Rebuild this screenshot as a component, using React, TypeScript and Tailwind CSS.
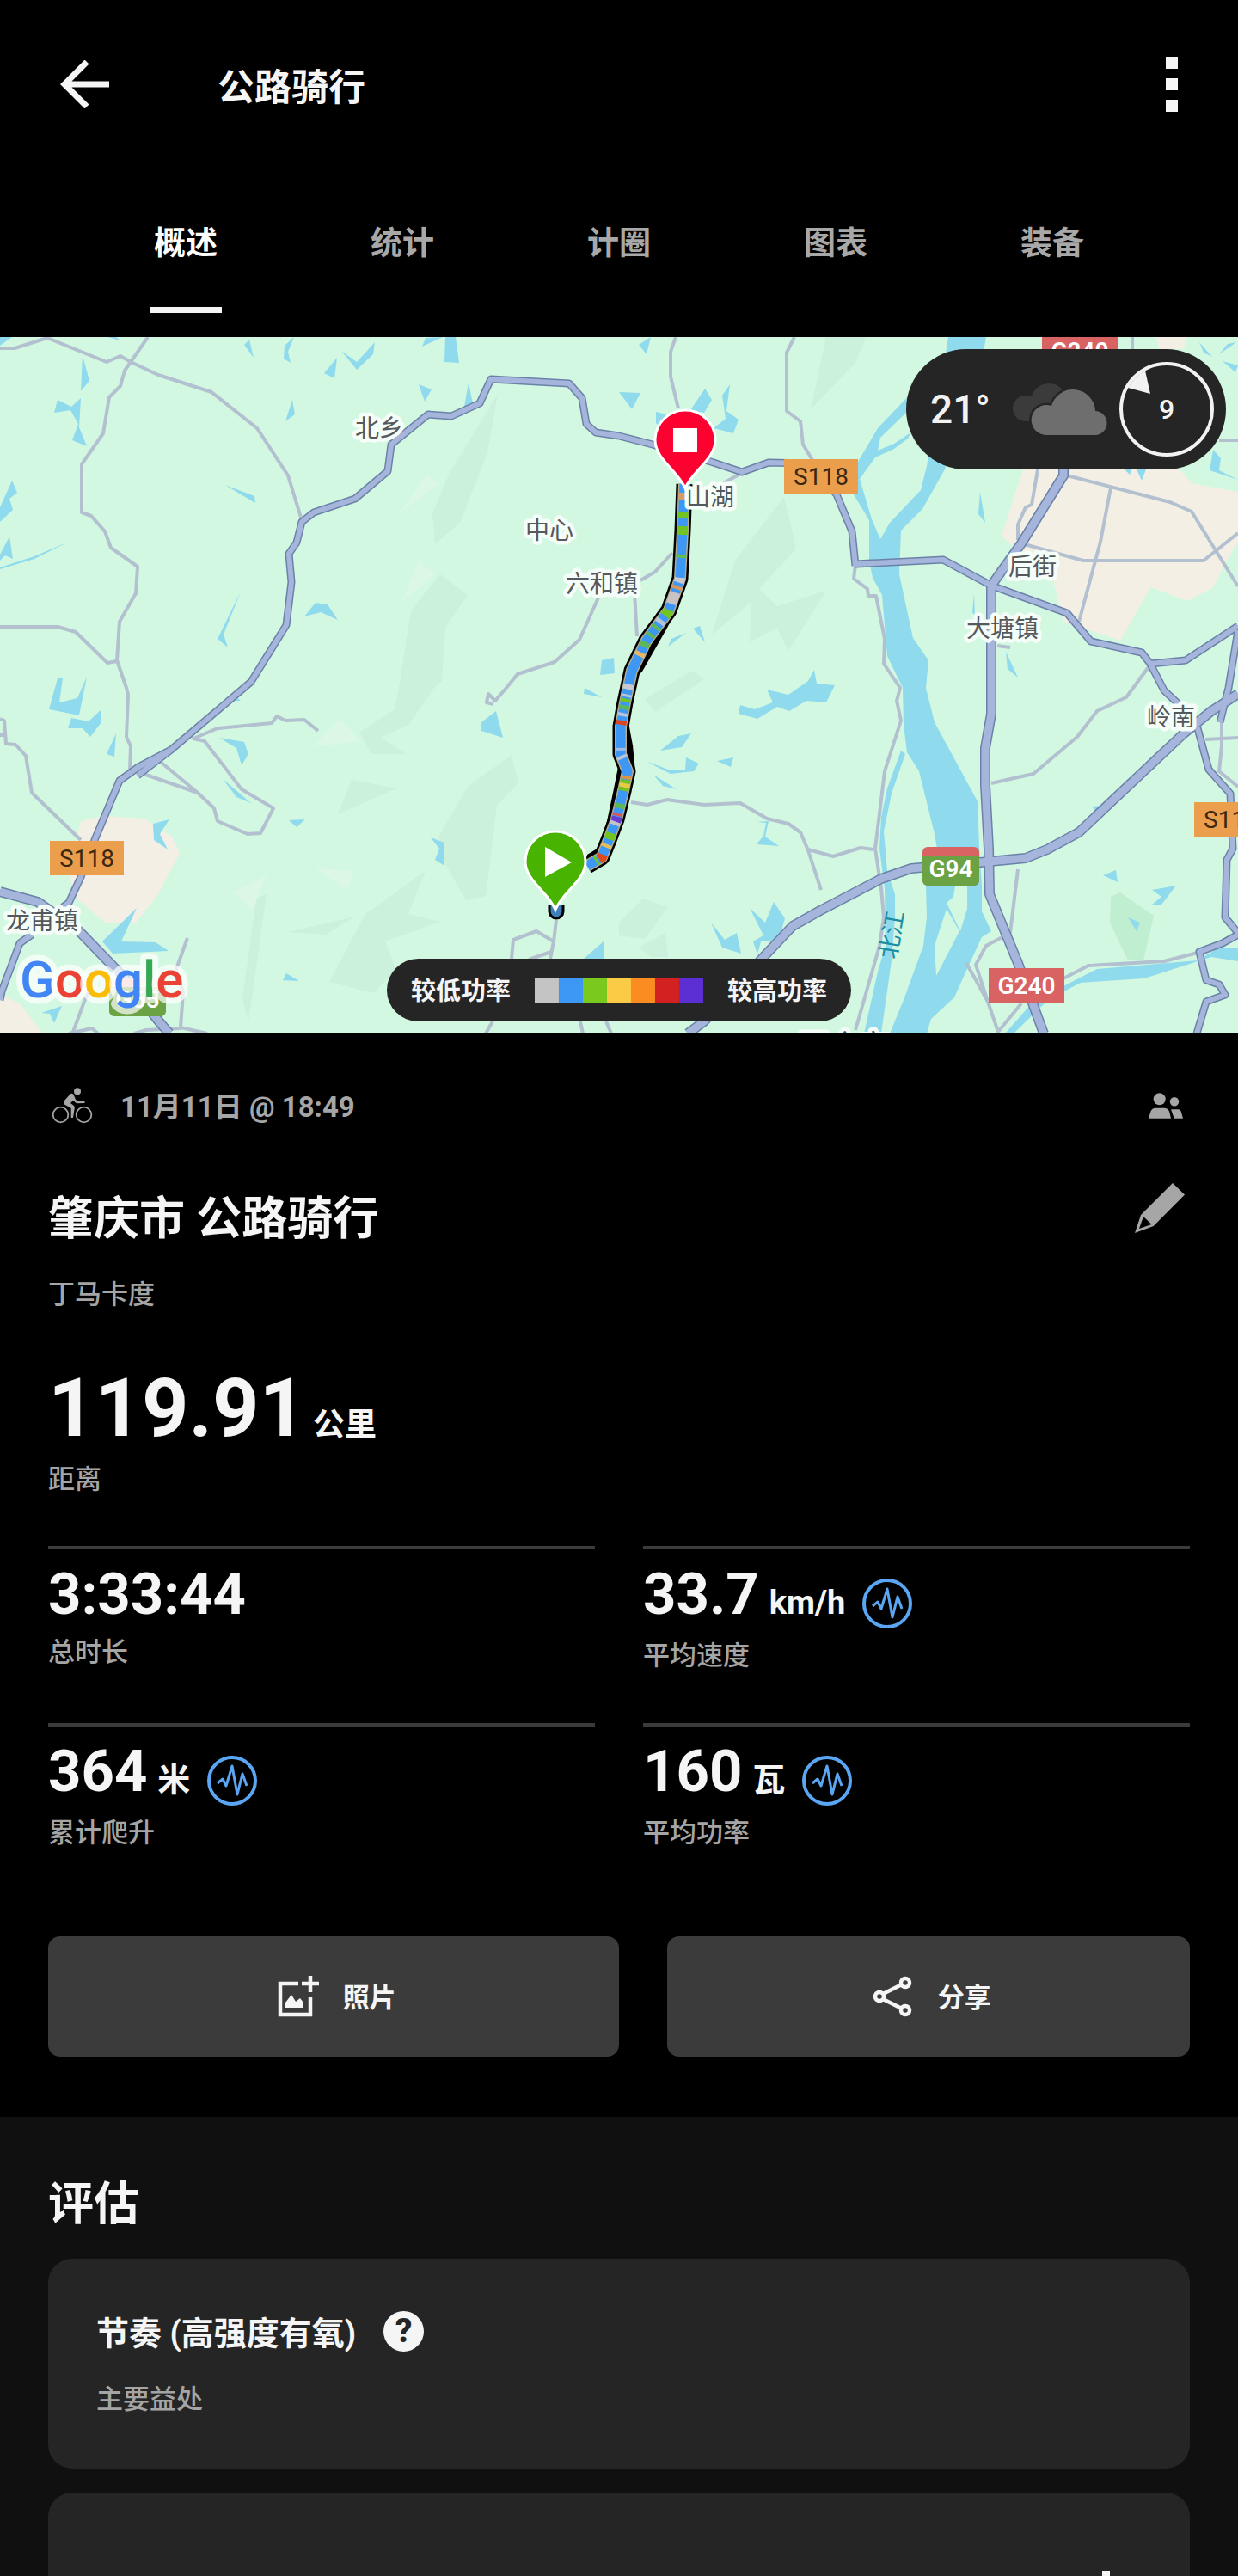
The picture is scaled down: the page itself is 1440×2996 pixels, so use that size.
import type { ReactNode } from 'react'

type Stat = {
  label: string
  value: string
  unit?: string
  hasChart?: boolean
}

type Band = {
  color: string
  from: number
  to: number
}

type PlaceLabel = {
  name: string
  x: number
  y: number
}

const TABS = ['概述', '统计', '计圈', '图表', '装备']

const STATS: Stat[] = [
  { label: '总时长', value: '3:33:44' },
  { label: '平均速度', value: '33.7', unit: 'km/h', hasChart: true },
  { label: '累计爬升', value: '364', unit: '米', hasChart: true },
  { label: '平均功率', value: '160', unit: '瓦', hasChart: true },
]

const POWER_SWATCHES = [
  'bg-[#c4c4c4]',
  'bg-[#3d97f5]',
  'bg-[#7ac91e]',
  'bg-[#fbcb45]',
  'bg-[#fb8c22]',
  'bg-[#d32020]',
  'bg-[#5b2fd4]',
]

const PLACES: PlaceLabel[] = [
  { name: '北乡', x: 441, y: 116 },
  { name: '中心', x: 639, y: 235 },
  { name: '六和镇', x: 700, y: 297 },
  { name: '山湖', x: 826, y: 196 },
  { name: '后街', x: 1201, y: 277 },
  { name: '大塘镇', x: 1166, y: 349 },
  { name: '岭南', x: 1362, y: 452 },
  { name: '龙甫镇', x: 49, y: 689 },
]

const HILLS = [
  '579,66 567,135 535,216 506,241 503,205 523,158',
  '512,276 544,300 518,338 514,400 505,408 475,451 443,466 473,485 432,485 418,460 459,433 464,408 478,318',
  '595,486 603,518 578,545 565,650 542,655 519,615 510,581 544,523',
  '409,515 461,525 393,555',
  '495,621 475,671 512,680 448,703 461,736 434,763 383,750 425,671',
  '413,674 379,695 335,692',
  '310,648 289,796 282,770 298,653',
  '961,0 1007,0 995,30 943,84',
  '912,186 926,246 883,293 904,313 961,295 917,365 904,338 872,355 874,308 828,346 855,260',
  '805,388 819,398 762,436 750,421',
  '748,653 777,663 750,700 720,696 720,681',
  '774,693 777,721 757,721 743,710',
]

const CLEARINGS = [
  '496,160 511,170 465,205',
  '487,261 507,276 467,308',
  '395,444 420,470 365,476',
  '310,626 294,666 271,646',
  '367,618 412,621 404,643',
]

const TOWNS = [
  '1190,154 1165,231 1172,238 1223,275 1237,331 1303,353 1338,291 1381,307 1411,291 1432,251 1440,238 1440,180 1386,170 1372,154 1372,140 1190,140',
  '1344,0 1381,0 1377,14 1349,14',
  '94,563 119,557 168,560 200,581 209,600 184,648 158,681 122,681 87,651 80,621',
  '0,765 23,775 50,810 0,810',
]

const RIVERS = [
  '1103,0 1147,0 1140,40 1125,100 1110,130 1100,151 1100,152 1073,200 1048,225 1046,276 1062,350 1080,376 1077,408 1087,448 1137,540 1139,593 1142,638 1142,668 1153,691 1142,698 1129,726 1110,768 1083,793 1078,810 1035,810 1051,771 1074,708 1078,675 1077,638 1090,595 1087,578 1069,505 1055,483 1051,451 1050,408 1032,371 1026,300 1015,280 1011,260 1011,213 991,180 998,145 1021,106 1060,65 1075,80 1056,118 1040,130 1018,140 1000,165 1014,212 1024,235 1035,216 1071,178 1078,150 1090,80',
  '1053,485 1037,531 1028,575 1032,621 1041,648 1041,675 1037,725 1025,810 1005,810 1021,738 1030,708 1029,641 1023,595 1025,558 1032,525 1048,481',
  '1237,755 1276,735 1393,725 1418,710 1440,711 1440,726 1409,721 1331,746 1257,751 1220,770 1179,810 1169,810 1200,775',
]

const ISLANDS = [
  '1101,665 1087,708 1089,743 1116,691',
  '1111,638 1109,651 1101,658 1117,691 1125,665 1125,638',
  '1021,132 1024,117 1058,84 1058,112 1040,124',
]

const PONDS = [
  '290,3 295,24 284,9',
  '342,0 335,17 338,30 330,25 331,10',
  '392,24 389,48 377,42',
  '397,16 415,29 436,6 434,20 415,38',
  '495,1 515,0 491,11',
  '518,0 530,0 534,30 517,29',
  '487,55 502,61 494,75',
  '545,53 550,78 540,81',
  '340,73 343,90 332,98',
  '96,21 104,51 94,63',
  '67,73 83,81 94,71 92,105 101,127 84,120 91,101 82,85 63,88',
  '14,167 20,181 11,188 15,201 0,215 0,198',
  '11,232 15,258 6,254 0,260 0,253',
  '0,268 40,255 80,238 40,258 0,270',
  '262,172 296,185 297,193 280,183',
  '280,296 260,346 265,361 253,351',
  '367,309 381,311 393,329 373,320 354,325',
  '700,376 714,373 715,391 698,393',
  '0,0 14,0 0,10',
  '125,0 135,0 140,4',
  '67,397 73,397 69,425 90,420 101,395 92,440 57,433',
  '83,443 103,447 117,434 118,448 105,465 96,455 79,455',
  '135,461 133,488 124,485',
  '271,415 280,423 262,423',
  '255,466 284,471 289,485 281,498 275,478',
  '259,514 292,542 275,535',
  '178,566 197,561 186,578 195,596 179,585',
  '336,562 355,561 345,570',
  '577,435 585,466 560,458 560,448',
  '501,582 517,588 517,615 506,608 511,595',
  '680,408 700,419 679,415',
  '159,664 141,703 181,704 196,714 131,717 119,703',
  '333,740 348,749 329,748',
  '703,702 703,723 679,723',
  '72,778 63,798 58,787 48,786',
  '743,9 757,0 752,20',
  '720,64 745,65 735,84',
  '820,60 828,73 819,88 803,85',
  '849,55 845,86 859,96 853,112 830,106 844,95 840,68',
  '763,87 775,90 775,110 763,100',
  '1140,180 1146,216 1138,206',
  '1133,298 1131,320 1134,325',
  '814,336 820,355 806,339',
  '798,344 777,360 781,351',
  '1170,366 1184,396 1172,386',
  '947,387 950,403 971,405 961,425 938,423 918,435 904,430 881,444 859,438 861,428 878,433 899,425 892,410 917,416 940,400',
  '1411,131 1420,141 1418,155 1440,166 1407,155',
  '1395,6 1410,23 1400,18',
  '1438,6 1418,20 1428,8',
  '1422,28 1440,33 1437,41',
  '1322,154 1333,154 1328,167',
  '1308,154 1316,154 1314,160',
  '804,461 793,477 768,481 789,464',
  '751,493 780,504 797,503 798,489 813,496 807,505 780,508',
  '853,489 850,500 834,493',
  '760,509 787,526 771,522',
  '894,563 890,581 906,592 880,590 888,580 891,565 880,564',
  '827,681 843,701 857,693 862,717 840,710',
  '872,664 890,681 900,657 913,676 906,701 885,703 881,718 876,703 888,696',
  '1270,546 1280,545 1275,552',
  '1283,626 1298,620 1300,634',
  '1340,643 1368,638 1351,660 1340,660 1351,651',
]

const LOCAL_ROADS = [
  'M0 13H17L55 1 124 29 140 22 152 29 184 44 246 64 299 106 335 161 351 213',
  'M172 0 152 29 145 39 140 57 127 70 120 112 95 148V204L106 208 122 226 129 245 160 267 158 298 139 331 136 376 147 408 149 416 147 465 152 476 151 505',
  'M0 337H67L88 343 125 379 136 377',
  'M0 444 5 446 7 473 18 474 30 487 37 530 94 585M0 463H6',
  'M370 458 354 445 332 446 322 441 316 449 253 455 225 467 238 470 281 526 318 548 303 577 288 578 253 563 249 548 230 530 183 491M161 506 230 530',
  'M218 699 204 738 213 761 210 803 241 810M156 810 170 806 210 804M85 808 112 735M80 810 107 804 114 810',
  'M696 303 674 352 645 378 602 392 589 408 576 423 568 415 566 425 574 427',
  'M647 678 644 703 640 723M644 703 624 691 597 701 595 723M641 715 615 724M573 796 565 810M675 796 678 810M705 796 711 810',
  'M924 0 915 18V86L931 98 934 125 945 143',
  'M786 0 780 17V46L789 83M863 158 832 175',
  'M738 298 741 348M745 283 762 273 782 251',
  'M995 265 993 281 1009 293 1010 301H1019L1029 351 1028 380 1047 408 1043 423 1048 446 1029 505 1018 595 1025 641 1028 675 1023 708 995 806',
  'M734 541 753 544 776 538 819 544 861 542 892 560 917 566 931 576 940 597 955 643M940 596 969 604 1001 594 1016 596',
  'M1153 519 1202 508 1253 465 1276 435 1310 419 1338 381',
  'M1402 468 1440 466M1421 448V475L1418 505 1440 523',
  'M1184 619 1175 693 1147 708 1135 730 1149 773 1161 808 1188 775M1124 728 1149 773',
  'M1237 746 1266 731 1354 726 1393 716',
  'M1207 154 1200 195 1193 198 1184 218V236',
  'M1241 161 1361 192 1386 203 1440 290',
  'M1292 175 1280 238 1255 331',
  'M1188 240 1260 260H1400L1440 228',
  'M1317 0V14M1418 120H1440M1160 359 1175 361',
]

const MAIN_ROADS = [
  'M160 510 199 480 292 401 333 335 339 285 336 252 345 239 351 215 365 204 413 188 451 156 455 125 498 90 525 92 558 77 571 49 662 54 677 71 682 101 693 111 720 115 759 125 830 146 863 157 894 146 940 147 973 183 991 226 995 266',
  'M199 480 161 500 139 516 110 585 94 628 80 658 73 663',
  'M37 695 23 705 2 761 0 771',
  'M995 264 1097 259 1153 289 1241 321 1269 354 1328 367 1338 380 1379 376 1440 336',
  'M1338 380 1354 411 1370 426 1393 455 1406 503 1431 531 1434 595 1427 608 1425 675 1440 693',
  'M1440 695 1422 705 1395 715 1403 748 1418 753 1425 765 1403 773 1392 810',
  'M1440 341 1429 408 1419 448',
]

const HIGHWAYS = [
  'M1237 150V161L1188 240 1153 289V438L1146 478V521L1150 595 1151 648 1184 728 1214 810',
  'M1440 415 1409 435 1377 461 1255 576 1218 596 1193 606 1140 611 1060 618 1025 630 954 667 922 685 888 721 819 796 800 810',
  'M0 645 44 657 92 691 150 751 184 795 197 810',
]

const ROUTE =
  'M796 171 794 225 791 281 778 318 752 353 735 388 727 425 722 453 722 485 730 505 725 528 717 561 708 585 700 605 683 615'

// Outward leg where it shows beside the return leg
const ROUTE_EDGES = [
  '785,321 775,340 763,361 747,389 740,396 745,375 765,340',
  '731,448 736,475 739,505 730,510 722,480',
  '719,500 713,530 706,563 712,568 727,515',
  '706,563 696,594 683,602 683,610 700,602 715,568',
]

const BANDS: Band[] = [
  { color: '#d99a6a', from: 10, to: 18 },
  { color: '#72c423', from: 32, to: 40 },
  { color: '#72c423', from: 49, to: 59 },
  { color: '#5fbf4a', from: 82, to: 86 },
  { color: '#c9c9d0', from: 109, to: 115 },
  { color: '#d9965e', from: 119, to: 123 },
  { color: '#c9c3c6', from: 127, to: 141 },
  { color: '#72c423', from: 149, to: 157 },
  { color: '#b9c4d6', from: 163, to: 168 },
  { color: '#5fb858', from: 172, to: 176 },
  { color: '#5fb858', from: 183, to: 187 },
  { color: '#5fb858', from: 195, to: 201 },
  { color: '#eab765', from: 208, to: 213 },
  { color: '#c9c9d0', from: 248, to: 254 },
  { color: '#b9c4d6', from: 260, to: 263 },
  { color: '#72c423', from: 265, to: 269 },
  { color: '#5fb858', from: 273, to: 278 },
  { color: '#b9c4d6', from: 282, to: 286 },
  { color: '#dd4520', from: 291, to: 296 },
  { color: '#a3bce0', from: 323, to: 326 },
  { color: '#b9c4d6', from: 332, to: 336 },
  { color: '#dd9347', from: 357, to: 361 },
  { color: '#72c423', from: 362, to: 366 },
  { color: '#e8cc3d', from: 366, to: 371 },
  { color: '#72c423', from: 371, to: 375 },
  { color: '#5fb858', from: 390, to: 396 },
  { color: '#d8585a', from: 402, to: 405 },
  { color: '#6a3bd0', from: 406, to: 412 },
  { color: '#c9c3c6', from: 412, to: 416 },
  { color: '#72c423', from: 426, to: 434 },
  { color: '#e6bd5b', from: 440, to: 444 },
  { color: '#df4a20', from: 453, to: 460 },
  { color: '#72c423', from: 462, to: 465 },
]

const PIN_PATH = 'M0 0C-8 -20 -35 -34 -35 -56A35 35 0 0 1 35 -56C35 -34 8 -20 0 0Z'

function Polygons({ items, fill }: { items: string[]; fill: string }) {
  return (
    <g fill={fill}>
      {items.map((points) => (
        <polygon key={points} points={points} />
      ))}
    </g>
  )
}

function Roads({ items, color, width }: { items: string[]; color: string; width: number }) {
  return (
    <g fill="none" stroke={color} strokeWidth={width} strokeLinejoin="round">
      {items.map((d) => (
        <path key={d} d={d} />
      ))}
    </g>
  )
}

function RoadShield({
  x,
  y,
  width,
  name,
  color,
  textColor,
  weight,
}: {
  x: number
  y: number
  width: number
  name: string
  color: string
  textColor: string
  weight: number
}) {
  return (
    <g>
      <rect x={x} y={y} width={width} height="40" fill={color} />
      <text
        x={x + width / 2}
        y={y + 30}
        textAnchor="middle"
        fontSize="28"
        fontWeight={weight}
        fill={textColor}
      >
        {name}
      </text>
    </g>
  )
}

function RideMap() {
  return (
    <svg
      viewBox="0 0 1440 810"
      preserveAspectRatio="xMidYMid slice"
      className="block h-[810px] w-full bg-[#d2f8e1]"
      role="img"
      aria-label="骑行路线地图"
    >
      <Polygons items={HILLS} fill="#cbf0dc" />
      <Polygons items={CLEARINGS} fill="#dcf8e5" />
      <polygon points="1303,646 1342,673 1330,725 1312,725 1291,681 1292,651" fill="#c0eed0" />
      <Polygons items={TOWNS} fill="#f4efe5" />
      <Polygons items={RIVERS} fill="#90daee" />
      <Polygons items={ISLANDS} fill="#d2f8e1" />
      <Polygons items={PONDS} fill="#90daee" />
      <polygon points="1312,675 1326,681 1322,691" fill="#90daee" />

      <Roads items={LOCAL_ROADS} color="#b2c0d0" width={4} />
      <Roads items={MAIN_ROADS} color="#6b82a8" width={9} />
      <Roads items={HIGHWAYS} color="#6b82a8" width={12} />
      <Roads items={MAIN_ROADS} color="#a6b5db" width={6} />
      <Roads items={HIGHWAYS} color="#a6b5db" width={9} />

      {/* Recorded track with its power bands */}
      <Polygons items={ROUTE_EDGES} fill="#000" />
      <g fill="none" strokeLinejoin="round">
        <path d={ROUTE} stroke="#000" strokeWidth="19" />
        <path d={ROUTE} stroke="#b5ad8c" strokeWidth="14" />
        <path d={ROUTE} stroke="#3d97f5" strokeWidth="11" />
        {BANDS.map((band) => (
          <path
            key={band.from}
            d={ROUTE}
            stroke={band.color}
            strokeWidth="12"
            strokeDasharray={`0 ${band.from} ${band.to - band.from} 1000`}
          />
        ))}
        <path d="M639 660V668A8 8 0 0 0 655 668V660" fill="#3f7fb8" stroke="#000" strokeWidth="3" />
      </g>

      <g
        fontSize="28"
        fill="#55585c"
        stroke="#f4fdf8"
        strokeWidth="9"
        strokeLinejoin="round"
        paintOrder="stroke"
        textAnchor="middle"
      >
        {PLACES.map((place) => (
          <text key={place.name} x={place.x} y={place.y}>
            {place.name}
          </text>
        ))}
        <text x="982" y="837" fontSize="35">
          四会市
        </text>
      </g>
      <text
        x="1037"
        y="705"
        textAnchor="middle"
        fontSize="28"
        fill="#1b8ea3"
        transform="rotate(-80 1037 695)"
      >
        北江
      </text>

      <RoadShield x={912} y={142} width={86} name="S118" color="#eb9e4c" textColor="#3a2811" weight={400} />
      <RoadShield x={58} y={586} width={86} name="S118" color="#eb9e4c" textColor="#3a2811" weight={400} />
      <RoadShield x={1389} y={541} width={86} name="S118" color="#eb9e4c" textColor="#3a2811" weight={400} />
      <RoadShield x={1212} y={-4} width={88} name="G240" color="#d96263" textColor="#fff" weight={600} />
      <RoadShield x={1150} y={734} width={88} name="G240" color="#d96263" textColor="#fff" weight={600} />

      <rect x="1073" y="593" width="66" height="45" rx="6" fill="#d96263" />
      <path d="M1073 604H1139V632A6 6 0 0 1 1133 638H1079A6 6 0 0 1 1073 632Z" fill="#6ba244" />
      <text x="1106" y="628" textAnchor="middle" fontSize="28" fontWeight="600" fill="#fff">
        G94
      </text>

      <rect x="127" y="745" width="66" height="45" rx="6" fill="#f3b5b6" />
      <path d="M127 756H193V784A6 6 0 0 1 187 790H133A6 6 0 0 1 127 784Z" fill="#6ba244" />
      <text x="160" y="780" textAnchor="middle" fontSize="28" fontWeight="600" fill="#fff">
        G55
      </text>

      <text
        x="23"
        y="768"
        fontSize="60"
        fontWeight="500"
        stroke="#fff"
        strokeOpacity="0.7"
        strokeWidth="14"
        strokeLinejoin="round"
        paintOrder="stroke"
      >
        <tspan fill="#4285f4">G</tspan>
        <tspan fill="#ea4335">o</tspan>
        <tspan fill="#fbbc05">o</tspan>
        <tspan fill="#4285f4">g</tspan>
        <tspan fill="#34a853">l</tspan>
        <tspan fill="#ea4335">e</tspan>
      </text>

      <g stroke="#fff" strokeWidth="3">
        <g transform="translate(797 176)">
          <path d={PIN_PATH} fill="#fb0230" />
          <rect x="-14" y="-70" width="28" height="28" fill="#fff" stroke="none" />
        </g>
        <g transform="translate(646 666)">
          <path d={PIN_PATH} fill="#48b300" />
          <path d="M-12 -73 19 -55 -12 -38Z" fill="#fff" stroke="none" />
        </g>
      </g>
    </svg>
  )
}

function WeatherBadge() {
  return (
    <div className="absolute top-[14px] right-[14px] flex h-[140px] w-[372px] items-center rounded-full bg-[#252525] pr-[14px] pl-7 text-[#f2f2f2]">
      <span className="flex-1 text-[46px] leading-[46px] font-medium">21°</span>
      <svg viewBox="0 0 110 60" className="h-[60px] w-[110px]" aria-hidden="true">
        <g fill="#3b3b3b">
          <circle cx="15" cy="29" r="15" />
          <circle cx="42" cy="21" r="21" />
          <path d="M15 20H42V44H15Z" />
        </g>
        <path
          d="M39 60A17.5 17.5 0 1 1 45 26A26 26 0 0 1 96 32A14 14 0 0 1 95 60Z"
          fill="#6e6e6e"
          stroke="#252525"
          strokeWidth="5"
          paintOrder="stroke"
        />
      </svg>
      <div className="relative ml-[14px] flex size-[110px] items-center justify-center rounded-full border-4 border-[#f2f2f2] text-[32px] leading-[32px] font-medium">
        <svg viewBox="0 0 110 110" className="absolute -inset-1 size-[110px]" aria-hidden="true">
          <path d="M10 30Q18 17 30 10L36 37Z" fill="#f2f2f2" />
        </svg>
        9
      </div>
    </div>
  )
}

function PowerLegend() {
  return (
    <div className="absolute bottom-[14px] left-1/2 flex h-[73px] -translate-x-1/2 items-center gap-7 rounded-full bg-[#252525] px-7 text-[29px] font-bold whitespace-nowrap text-[#f4f4f4]">
      <span className="pt-1">较低功率</span>
      <span className="flex">
        {POWER_SWATCHES.map((swatch) => (
          <span key={swatch} className={`size-7 ${swatch}`} />
        ))}
      </span>
      <span className="pt-1">较高功率</span>
    </div>
  )
}

function ChartIcon() {
  return (
    <svg viewBox="0 0 58 58" className="size-[58px]" fill="none" stroke="#5ba6f4" aria-hidden="true">
      <circle cx="29" cy="29" r="27" strokeWidth="4" />
      <path d="M12 32 18 27 22 35 29 12 35 45 41 21 46 35" strokeWidth="3" strokeLinejoin="round" />
    </svg>
  )
}

function StatCell({ stat }: { stat: Stat }) {
  return (
    <div className="h-[206px] border-t-4 border-[#3b3b3b] pt-4">
      <div className="flex items-start">
        <p className="flex items-baseline text-[67px] leading-[72px] font-bold text-[#f5f5f5]">
          {stat.value}
          {stat.unit && <span className="ml-3 text-[38px] leading-10 font-bold">{stat.unit}</span>}
        </p>
        {stat.hasChart && (
          <button type="button" aria-label={`${stat.label}图表`} className="mt-[18px] ml-5">
            <ChartIcon />
          </button>
        )}
      </div>
      <p className="mt-3 text-[31px] leading-10 font-medium text-[#a5a5a5]">{stat.label}</p>
    </div>
  )
}

function ActionButton({ icon, label }: { icon: ReactNode; label: string }) {
  return (
    <button
      type="button"
      className="flex h-[140px] items-center justify-center gap-7 rounded-[14px] bg-[#3b3b3b] pl-2 text-[31px] font-bold text-[#f5f5f5]"
    >
      {icon}
      <span className="pt-1">{label}</span>
    </button>
  )
}

export default function App() {
  return (
    <div className="flex min-h-screen flex-col bg-black font-['Roboto','Noto_Sans_CJK_SC',sans-serif] text-[#f5f5f5]">
      <header className="flex h-[196px] items-center px-[70px]">
        <button type="button" aria-label="返回">
          <svg viewBox="0 0 58 56" className="h-14 w-[58px]" fill="none" stroke="#f5f5f5" strokeWidth="7" aria-hidden="true">
            <path d="M57 28H5M31 2 5 28 31 54" />
          </svg>
        </button>
        <h1 className="mt-2 ml-[125px] flex-1 text-[43px] font-bold">公路骑行</h1>
        <button type="button" aria-label="更多" className="flex flex-col gap-[11px]">
          <span className="size-[14px] bg-[#f5f5f5]" />
          <span className="size-[14px] bg-[#f5f5f5]" />
          <span className="size-[14px] bg-[#f5f5f5]" />
        </button>
      </header>

      <nav className="grid h-[196px] grid-cols-5 px-[90px]">
        {TABS.map((tab, index) => (
          <a
            key={tab}
            href="#"
            aria-current={index === 0 ? 'page' : undefined}
            className={
              index === 0
                ? 'flex flex-col items-center pt-[62px] text-[37px] leading-[52px] font-bold text-white'
                : 'flex flex-col items-center pt-[62px] text-[37px] leading-[52px] font-bold text-[#a8a8a8]'
            }
          >
            {tab}
            {index === 0 && <span className="mt-[47px] h-[7px] w-[84px] bg-[#f5f5f5]" />}
          </a>
        ))}
      </nav>

      <section className="relative overflow-hidden">
        <RideMap />
        <WeatherBadge />
        <PowerLegend />
      </section>

      <section className="px-14 pt-[60px] pb-[70px]">
        <div className="flex h-12 items-center pr-2 pl-1 text-[#a6a6a6]">
          <svg viewBox="0 0 48 42" className="h-[42px] w-12" fill="currentColor" aria-hidden="true">
            <circle cx="10.5" cy="31.5" r="8.8" fill="none" stroke="currentColor" strokeWidth="1.8" />
            <circle cx="37.5" cy="31.5" r="8.8" fill="none" stroke="currentColor" strokeWidth="1.8" />
            <circle cx="30" cy="4.3" r="4" />
            <path d="M22 7Q25 6 26 9L28 14 31 15.7 38.5 16V18L29 18.2 25 15 22 18 26 21Q27 22 26.7 24L25 35H22.7V24L15 19.5Q13 18 15 15Z" />
          </svg>
          <p className="ml-8 flex-1 pt-1 text-[33px] leading-10 font-bold">11月11日 @ 18:49</p>
          <svg viewBox="0 0 40 30" className="h-[30px] w-10" fill="currentColor" aria-hidden="true">
            <circle cx="12.7" cy="7.2" r="7" />
            <circle cx="30" cy="10.3" r="5.2" />
            <path d="M0 29.7 2.5 21.5Q4 17.7 8 17.7H18Q22.5 17.7 24 21.5L26 29.7ZM26 19.2H34.5Q37 19.2 38 22.5L40 29.7H29.7Z" />
          </svg>
        </div>

        <div className="mt-[66px] flex items-start justify-between pr-1.5">
          <h2 className="pt-1 text-[53px] leading-[76px] font-bold">肇庆市 公路骑行</h2>
          <button type="button" aria-label="编辑">
            <svg viewBox="0 0 58 58" className="size-[58px]" fill="#a6a6a6" aria-hidden="true">
              <path fillRule="evenodd" d="M44 0 58 13.5 21.7 50 0 58 7 37ZM10 39 5 53 19.5 48Z" />
            </svg>
          </button>
        </div>
        <p className="mt-[30px] text-[31px] leading-10 font-medium text-[#a5a5a5]">丁马卡度</p>

        <p className="mt-[62px] flex items-baseline text-[95px] leading-[100px] font-bold">
          119.91<span className="ml-2 text-[37px] leading-10 font-bold">公里</span>
        </p>
        <p className="mt-[13px] text-[31px] leading-10 font-medium text-[#a5a5a5]">距离</p>

        <div className="mt-[57px] grid grid-cols-2 gap-x-14">
          {STATS.map((stat) => (
            <StatCell key={stat.label} stat={stat} />
          ))}
        </div>

        <div className="mt-[42px] grid grid-cols-[12fr_11fr] gap-14">
          <ActionButton
            label="照片"
            icon={
              <svg viewBox="0 0 48 48" className="size-12" fill="none" stroke="#f5f5f5" strokeWidth="4.5" aria-hidden="true">
                <path d="M24 9H3V45H38V25M38 0V19M28 9H48" />
                <path d="M9 37V31L16 22 21 30 26 26 30 31V37Z" fill="#f5f5f5" stroke="none" />
              </svg>
            }
          />
          <ActionButton
            label="分享"
            icon={
              <svg viewBox="0 0 48 48" className="size-12" fill="none" stroke="#f5f5f5" strokeWidth="4.5" aria-hidden="true">
                <circle cx="8" cy="24" r="5" />
                <circle cx="38" cy="8" r="5" />
                <circle cx="38" cy="40" r="5" />
                <path d="M12 21 34 10M12 27 34 38" />
              </svg>
            }
          />
        </div>
      </section>

      <section className="flex flex-1 flex-col bg-[#101010] px-14 pt-[70px]">
        <h2 className="text-[53px] leading-[64px] font-bold">评估</h2>
        <article className="mt-[31px] rounded-[28px] bg-[#252525] px-14 pt-[61px] pb-[60px]">
          <div className="flex items-start gap-8">
            <h3 className="text-[38px] leading-[52px] font-bold">节奏 (高强度有氧)</h3>
            <button
              type="button"
              aria-label="帮助"
              className="flex size-[47px] items-center justify-center rounded-full bg-[#f5f5f5] text-[38px] font-black text-[#252525]"
            >
              ?
            </button>
          </div>
          <p className="mt-[31px] text-[31px] leading-10 font-medium text-[#a5a5a5]">主要益处</p>
        </article>
        <article className="mt-7 flex flex-1 items-end justify-end rounded-t-[28px] bg-[#252525] pr-[93px]">
          <span className="h-[6px] w-[9px] bg-[#f5f5f5]" />
        </article>
      </section>
    </div>
  )
}
